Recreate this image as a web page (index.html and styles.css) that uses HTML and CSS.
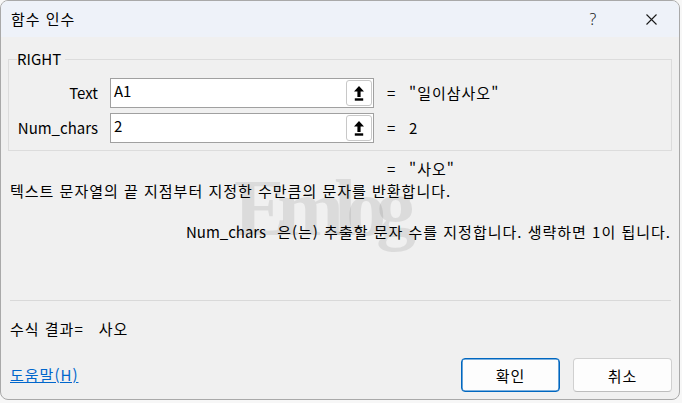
FILE: index.html
```html
<!DOCTYPE html>
<html lang="ko">
<head>
<meta charset="utf-8">
<title>함수 인수</title>
<link rel="stylesheet" href="styles.css">
</head>
<body>
<div class="window">
  <div class="titlebar">
    <span class="title ko">함수 인수</span>
    <div class="caption-buttons">
      <span class="cap-btn help">?</span>
      <span class="cap-btn close">
        <svg width="11" height="11" viewBox="0 0 11 11"><path d="M0.5 0.5 L10.5 10.5 M10.5 0.5 L0.5 10.5" stroke="#1a1a1a" stroke-width="1.1" fill="none"/></svg>
      </span>
    </div>
  </div>

  <fieldset class="group">
    <legend>RIGHT</legend>
    <div class="args">
      <span class="arg-label">Text</span>
      <div class="arg-input"><span class="val">A1</span>
        <span class="ref-btn"><svg width="10" height="15" viewBox="0 0 10 15"><path d="M5 0 L10 5.5 L6.6 5.5 L6.6 11 L3.4 11 L3.4 5.5 L0 5.5 Z" fill="#000"/><rect x="0.8" y="12.3" width="8.4" height="2.4" fill="#000"/></svg></span>
      </div>
      <span class="arg-result"><span class="eq">=</span><span class="ko">"일이삼사오"</span></span>

      <span class="arg-label">Num_chars</span>
      <div class="arg-input"><span class="val">2</span>
        <span class="ref-btn"><svg width="10" height="15" viewBox="0 0 10 15"><path d="M5 0 L10 5.5 L6.6 5.5 L6.6 11 L3.4 11 L3.4 5.5 L0 5.5 Z" fill="#000"/><rect x="0.8" y="12.3" width="8.4" height="2.4" fill="#000"/></svg></span>
      </div>
      <span class="arg-result"><span class="eq">=</span>2</span>
    </div>
  </fieldset>

  <div class="func-result"><span class="eq">=</span><span class="ko">"사오"</span></div>
  <div class="func-desc ko">텍스트 문자열의 끝 지점부터 지정한 수만큼의 문자를 반환합니다.</div>
  <div class="arg-desc"><span class="arg-name">Num_chars</span><span class="ko">은(는) 추출할 문자 수를 지정합니다. 생략하면 1이 됩니다.</span></div>

  <div class="separator"></div>

  <div class="formula-result ko">수식 결과=<span class="fr-val">사오</span></div>

  <div class="footer">
    <a class="help-link ko" href="#">도움말(H)</a>
    <div class="buttons">
      <button class="btn primary ko">확인</button>
      <button class="btn ko">취소</button>
    </div>
  </div>

  <div class="watermark">Emlog</div>
</div>
</body>
</html>
```

FILE: styles.css
```css
html, body {
  margin: 0;
  padding: 0;
}
body {
  background: #f7f7f7;
  font-family: "Noto Sans CJK KR", "Noto Sans", sans-serif;
  font-size: 15px;
  color: #000;
  width: 682px;
  height: 403px;
  overflow: hidden;
}
.ko {
  letter-spacing: 1px;
}
.window {
  position: relative;
  width: 680px;
  height: 400px;
  box-sizing: border-box;
  border: 1px solid #a9a9a9;
  border-radius: 8px;
  overflow: hidden;
  background: #f0f0f0;
  display: flex;
  flex-direction: column;
}
.titlebar {
  height: 36px;
  flex: none;
  background: #eef2f9;
  display: flex;
  align-items: center;
  justify-content: space-between;
  padding-left: 10px;
}
.title {
  line-height: 20px;
  margin-top: -1px;
}
.caption-buttons {
  display: flex;
  height: 100%;
}
.cap-btn {
  width: 56px;
  height: 100%;
  display: flex;
  align-items: center;
  justify-content: center;
}
.help {
  font-family: "Noto Sans", sans-serif;
  font-size: 16px;
  color: #1a1a1a;
  font-weight: 300;
  padding-right: 4px;
  box-sizing: border-box;
}
.group {
  margin: 13px 7px 0 7px;
  padding: 10px 0 7px 0;
  border: 1px solid #dcdcdc;
  min-width: 0;
}
.group legend {
  margin-left: 8px;
  padding: 0 4px 0 0;
  line-height: 18px;
}
.args {
  display: grid;
  grid-template-columns: 89px 264px 1fr;
  column-gap: 12px;
  row-gap: 5px;
  align-items: center;
}
.arg-label {
  text-align: right;
  line-height: 20px;
}
.arg-input {
  height: 30px;
  box-sizing: border-box;
  border: 1px solid #a0a0a0;
  background: #fff;
  display: flex;
  align-items: center;
  justify-content: space-between;
  padding: 0 1px 0 3px;
}
.val {
  line-height: 20px;
  margin-top: -4px;
}
.ref-btn {
  width: 26px;
  height: 26px;
  box-sizing: border-box;
  border: 1px solid #c8c8c8;
  border-radius: 3px;
  background: #fff;
  display: flex;
  align-items: center;
  justify-content: center;
}
.arg-result {
  padding-left: 1px;
  line-height: 20px;
}
.eq {
  display: inline-block;
  width: 22px;
  letter-spacing: 0;
}
.func-result {
  margin-top: 9px;
  padding-left: 386px;
  line-height: 18px;
}
.func-desc {
  margin-top: 3px;
  padding-left: 9px;
  line-height: 20px;
}
.arg-desc {
  margin-top: 21px;
  display: flex;
  justify-content: flex-end;
  gap: 11px;
  padding-right: 8px;
  line-height: 20px;
}
.separator {
  margin: 58px 8px 0 9px;
  height: 1px;
  background: #d9d9d9;
}
.formula-result {
  margin-top: 18px;
  padding-left: 9px;
  line-height: 20px;
}
.fr-val {
  margin-left: 15px;
}
.footer {
  margin-top: 19px;
  display: flex;
  align-items: center;
  justify-content: space-between;
  padding: 0 7px 0 9px;
}
.help-link {
  color: #0066cc;
  text-decoration: underline;
  line-height: 20px;
}
.buttons {
  display: flex;
  gap: 13px;
}
.btn {
  width: 99px;
  height: 34px;
  box-sizing: border-box;
  font-family: inherit;
  font-size: 15px;
  color: #000;
  background: #fdfdfd;
  border: 1px solid #d0d0d0;
  border-bottom-color: #bdbdbd;
  border-radius: 4px;
  padding: 0;
}
.btn.primary {
  border: 1px solid #0067c0;
  box-shadow: inset 0 0 0 0.6px #0067c0;
}
.watermark {
  position: absolute;
  left: 233px;
  top: 157px;
  font-family: "Liberation Serif", serif;
  font-weight: bold;
  font-size: 80px;
  letter-spacing: -10px;
  line-height: 100px;
  color: rgba(0, 0, 0, 0.085);
  pointer-events: none;
}
```
